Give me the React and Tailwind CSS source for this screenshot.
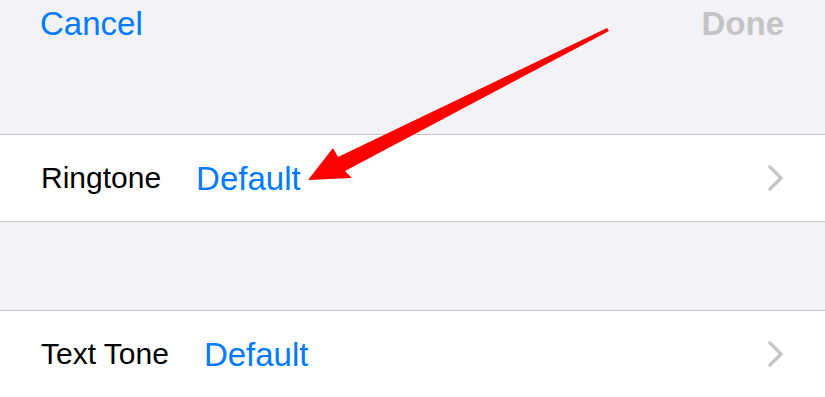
import React from "react";

function Chevron() {
  return (
    <svg width="18" height="28" viewBox="0 0 18 28" className="shrink-0">
      <polyline
        points="3,3 14,14 3,25"
        fill="none"
        stroke="#c7c7cc"
        strokeWidth="3.6"
        strokeLinecap="round"
        strokeLinejoin="round"
      />
    </svg>
  );
}

function Row({ label, value, valueClass }) {
  return (
    <div className="flex h-[86px] items-center bg-white pl-[41px] pr-[40px]">
      <span className="text-[30px] leading-none text-black">{label}</span>
      <span className={`text-[33px] leading-none text-[#007aff] ${valueClass}`}>{value}</span>
      <div className="flex-1" />
      <Chevron />
    </div>
  );
}

export default function App() {
  return (
    <div
      className="relative h-[397px] w-[825px] overflow-hidden bg-[#f2f2f7]"
      style={{ fontFamily: '"Liberation Sans", Arial, sans-serif' }}
    >
      <div className="flex h-[134px] items-start justify-between pl-[40px] pr-[41px] pt-[7px]">
        <span className="text-[33px] leading-none text-[#007aff]">Cancel</span>
        <span className="text-[33px] font-bold leading-none text-[#c4c4c6]">Done</span>
      </div>
      <div className="border-y border-[#c8c7cc]">
        <Row label="Ringtone" value="Default" valueClass="ml-[35px]" />
      </div>
      <div className="h-[88px]" />
      <div className="border-t border-[#c8c7cc]">
        <Row label="Text Tone" value="Default" valueClass="ml-[35px]" />
      </div>
      <svg
        className="pointer-events-none absolute left-0 top-0"
        width="825"
        height="397"
        viewBox="0 0 825 397"
      >
        <polygon
          points="308,180 333,148 338,157 607,28 609,31 345,171 352,178"
          fill="#ff0000"
        />
      </svg>
    </div>
  );
}
